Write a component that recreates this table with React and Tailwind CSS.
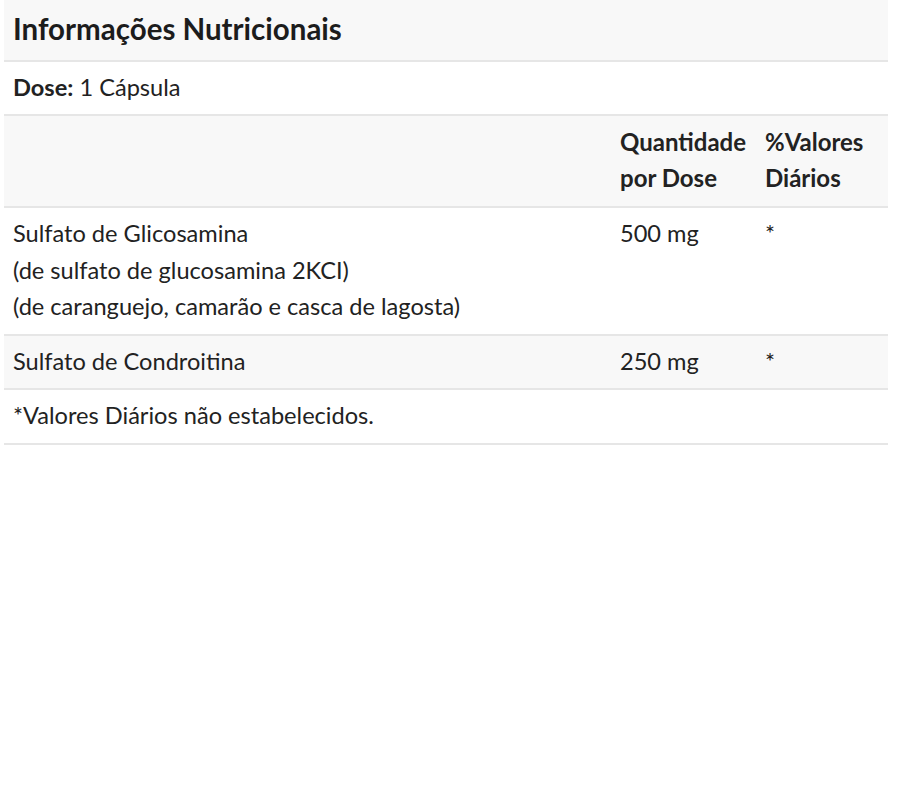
const rows = [
  {
    name: [
      "Sulfato de Glicosamina",
      "(de sulfato de glucosamina 2KCI)",
      "(de caranguejo, camarão e casca de lagosta)",
    ],
    amount: "500 mg",
    dv: "*",
    bg: "bg-white",
  },
  {
    name: ["Sulfato de Condroitina"],
    amount: "250 mg",
    dv: "*",
    bg: "bg-[#f8f8f8]",
  },
];

const App = () => {
  return (
    <div className="bg-white min-h-[800px] pl-[4px] font-['Lato','Liberation_Sans',sans-serif] text-[#222]">
      <div className="w-[884px]">
        <div className="bg-[#f8f8f8] border-b-2 border-[#e6e6e6] h-[62px] px-[9px] pt-[9px]">
          <h2 className="text-[29.5px] leading-[40px] font-bold text-[#1c1c1c]">
            Informações Nutricionais
          </h2>
        </div>

        <div className="border-b-2 border-[#e6e6e6] h-[54px] px-[9px] pt-[7px] text-[23.6px] leading-[36px]">
          <span className="font-bold">Dose:</span> 1 Cápsula
        </div>

        <div className="flex bg-[#f8f8f8] border-b-2 border-[#e6e6e6] h-[92px] py-[8px] text-[24px] leading-[36px] font-bold">
          <div className="w-[607px]" />
          <div className="w-[145px] px-[9px]">
            Quantidade
            <br />
            por Dose
          </div>
          <div className="flex-1 px-[9px]">
            %Valores
            <br />
            Diários
          </div>
        </div>

        {rows.map((row, i) => (
          <div
            key={i}
            className={`flex ${row.bg} border-b-2 border-[#e6e6e6] pt-[7px] pb-[9px] text-[23.6px] leading-[36.5px]`}
          >
            <div className="w-[607px] px-[9px]">
              {row.name.map((line) => (
                <div key={line}>{line}</div>
              ))}
            </div>
            <div className="w-[145px] px-[9px]">{row.amount}</div>
            <div className="flex-1 px-[9px]">{row.dv}</div>
          </div>
        ))}

        <div className="border-b-2 border-[#e6e6e6] h-[55px] px-[9px] pt-[7px] text-[23.6px] leading-[36px]">
          *Valores Diários não estabelecidos.
        </div>
      </div>
    </div>
  );
};

export default App;
